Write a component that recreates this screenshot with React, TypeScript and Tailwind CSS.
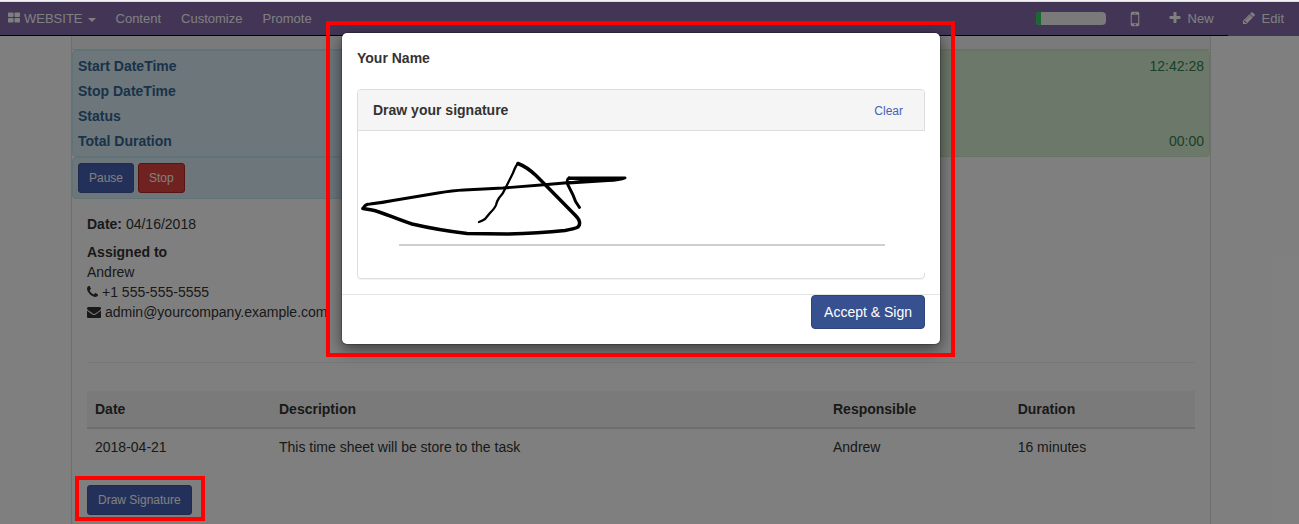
import { ReactNode } from "react";

type IconProps = { d: string; className: string; viewBox?: string };

function Icon({ d, className, viewBox = "0 0 1792 1792" }: IconProps) {
  return (
    <svg viewBox={viewBox} className={className} fill="currentColor" aria-hidden="true">
      <path d={d} />
    </svg>
  );
}

const ICONS = {
  blocks:
    "M832 1024v384q0 52-38 90t-90 38h-512q-52 0-90-38t-38-90v-384q0-52 38-90t90-38h512q52 0 90 38t38 90zm0-768v384q0 52-38 90t-90 38h-512q-52 0-90-38t-38-90v-384q0-52 38-90t90-38h512q52 0 90 38t38 90zm896 768v384q0 52-38 90t-90 38h-512q-52 0-90-38t-38-90v-384q0-52 38-90t90-38h512q52 0 90 38t38 90zm0-768v384q0 52-38 90t-90 38h-512q-52 0-90-38t-38-90v-384q0-52 38-90t90-38h512q52 0 90 38t38 90z",
  mobile:
    "M976 1408q0-33-23.5-56.5t-56.5-23.5-56.5 23.5-23.5 56.5 23.5 56.5 56.5 23.5 56.5-23.5 23.5-56.5zm208-160v-704q0-13-9.5-22.5t-22.5-9.5h-512q-13 0-22.5 9.5t-9.5 22.5v704q0 13 9.5 22.5t22.5 9.5h512q13 0 22.5-9.5t9.5-22.5zm-192-848q0-16-16-16h-160q-16 0-16 16t16 16h160q16 0 16-16zm288-16v1024q0 52-38 90t-90 38h-512q-52 0-90-38t-38-90v-1024q0-52 38-90t90-38h512q52 0 90 38t38 90z",
  plus: "M1600 736v192q0 40-28 68t-68 28h-416v416q0 40-28 68t-68 28h-192q-40 0-68-28t-28-68v-416h-416q-40 0-68-28t-28-68v-192q0-40 28-68t68-28h416v-416q0-40 28-68t68-28h192q40 0 68 28t28 68v416h416q40 0 68 28t28 68z",
  pencil:
    "M491 1536l91-91-235-235-91 91v107h128v128h107zm523-928q0-22-22-22-10 0-17 7l-542 542q-7 7-7 17 0 22 22 22 10 0 17-7l542-542q7-7 7-17zm-54-192l416 416-832 832h-416v-416zm683 96q0 53-37 90l-166 166-416-416 166-165q36-38 90-38 53 0 91 38l235 234q37 39 37 91z",
  phone:
    "M1600 1240q0 27-10 70.5t-21 68.5q-21 50-122 106-94 51-186 51-27 0-53-3.5t-57-12.5-47-14.5-55.5-20.5-49.5-18q-98-35-175-83-127-79-264-216t-216-264q-48-77-83-175-3-9-18-49.5t-20.5-55.5-14.5-47-12.5-57-3.5-53q0-92 51-186 56-101 106-122 25-11 68.5-21t70.5-10q14 0 21 3 18 6 53 76 11 19 30 54t35 63.5 31 53.5q3 4 17.5 25t21.5 35.5 7 28.5q0 20-28.5 50t-62 55-62 53-28.5 46q0 9 5 22.5t8.5 20.5 14 24 11.5 19q76 137 174 235t235 174q2 1 19 11.5t24 14 20.5 8.5 22.5 5q18 0 46-28.5t53-62 55-62 50-28.5q14 0 28.5 7t35.5 21.5 25 17.5q25 15 53.5 31t63.5 35 54 30q70 35 76 53 3 7 3 21z",
  envelope:
    "M1792 710v794q0 66-47 113t-113 47h-1472q-66 0-113-47t-47-113v-794q44 49 101 87 362 246 497 345 57 42 92.5 65.5t94.5 48 110 24.5h2q51 0 110-24.5t94.5-48 92.5-65.5q170-123 498-345 57-39 100-87zm0-294q0 79-49 151t-122 123q-376 261-468 325-10 7-42.5 31t-54 38.5-52 32.5-57.5 27-50 9h-2q-23 0-50-9t-57.5-27-52-32.5-54-38.5-42.5-31q-91-64-262-182.5t-205-142.5q-62-42-117-115.5t-55-136.5q0-78 41.5-130t118.5-52h1472q65 0 112.5 47t47.5 113z",
};

function SmallButton({ tone, children }: { tone: "primary" | "danger"; children: ReactNode }) {
  const colors =
    tone === "primary" ? "border-[#3e5499] bg-[#4662b5]" : "border-[#ac2925] bg-[#df4540]";
  return (
    <button
      type="button"
      className={`rounded-[3px] border px-2.5 py-[5px] text-xs leading-[18px] text-white ${colors}`}
    >
      {children}
    </button>
  );
}

function Highlight({ className }: { className: string }) {
  return <div className={`pointer-events-none absolute z-30 border-4 border-[#ff0000] ${className}`} />;
}

function Navbar() {
  return (
    <nav className="flex h-[34px] bg-[#856aad] text-[13px] leading-5 text-white">
      <div className="flex flex-1 items-center border-b border-black pl-2">
        <button type="button" className="flex items-center">
          <Icon d={ICONS.blocks} viewBox="64 128 1664 1408" className="mb-0.5 mr-1 h-[11px] w-3" />
          WEBSITE
          <span className="ml-[5px] mt-0.5 border-x-4 border-t-4 border-x-transparent border-t-white" />
        </button>
        <div className="ml-5 flex gap-5">
          <a href="#content">Content</a>
          <a href="#customize">Customize</a>
          <a href="#promote">Promote</a>
        </div>
        <div className="ml-auto flex items-center">
          <div className="flex h-[13px] w-[70px] overflow-hidden rounded bg-[#f5f5f5]">
            <div className="w-[5px] bg-[#30d060]" />
          </div>
          <button type="button" aria-label="Mobile preview" className="ml-[19px]">
            <Icon d={ICONS.mobile} className="size-5" />
          </button>
          <button type="button" className="ml-[23px] mr-[14px] flex items-center">
            <Icon d={ICONS.plus} className="mb-px mr-1.5 size-[14px]" />
            New
          </button>
        </div>
      </div>
      <button type="button" className="flex items-center pb-px pl-[14px] pr-[15px]">
        <Icon d={ICONS.pencil} className="mb-px mr-1.5 size-[14px]" />
        Edit
      </button>
    </nav>
  );
}

function TimerSummary() {
  return (
    <>
      <dl className="grid grid-cols-2 leading-[25px]">
        <div className="rounded border border-[#bce8f1] bg-[#d9edf7] px-[5px] pb-0.5 pt-[3px] font-bold text-[#346592]">
          <dt>Start DateTime</dt>
          <dt>Stop DateTime</dt>
          <dt>Status</dt>
          <dt>Total Duration</dt>
        </div>
        <div className="flex flex-col justify-between rounded border border-[#d0e9c6] bg-[#d9f0d3] px-[5px] pb-0.5 pt-[3px] text-right text-[#368050]">
          <dd>12:42:28</dd>
          <dd>00:00</dd>
        </div>
      </dl>
      <div className="flex w-1/2 gap-1 rounded border border-[#bce8f1] bg-[#d9edf7] p-[5px]">
        <SmallButton tone="primary">Pause</SmallButton>
        <SmallButton tone="danger">Stop</SmallButton>
      </div>
    </>
  );
}

function Timesheet() {
  return (
    <table className="w-full table-fixed text-left">
      <thead>
        <tr className="border-b-2 border-[#ddd] bg-[#f5f5f5]">
          <th className="w-[184px] p-2">Date</th>
          <th className="w-1/2 p-2">Description</th>
          <th className="w-1/6 p-2">Responsible</th>
          <th className="p-2">Duration</th>
        </tr>
      </thead>
      <tbody>
        <tr>
          <td className="p-2">2018-04-21</td>
          <td className="p-2">This time sheet will be store to the task</td>
          <td className="p-2">Andrew</td>
          <td className="p-2">16 minutes</td>
        </tr>
      </tbody>
    </table>
  );
}

function Signature() {
  return (
    <svg
      viewBox="0 0 280 113"
      className="h-[113px] w-[280px]"
      fill="none"
      stroke="#000"
      strokeLinecap="round"
      strokeLinejoin="round"
      role="img"
      aria-label="Signature"
    >
      <path
        strokeWidth="2.3"
        d="M121 91 Q125 89.500 127 88 L132 82 Q137 77 138 74 Q139 70 141 67 Q145 63 147 58 L155 42 Q158 34 160 32.500"
      />
      <path
        strokeWidth="3.5"
        d="M160 32.500 Q169 36 178 44.500 L187 53.500 L217 84 Q221 88 221.500 91 Q222 94 220 96 Q216 98 207 99.500 Q180 102.500 149 103 L109 102.500 Q80 99 54 93 C38 88 24 81 14 79 L5 77.500"
      />
      <path
        strokeWidth="2.9"
        d="M5 77.500 Q7 73 12 73 Q25 71.500 35 69.500 L80 62 Q95 59.500 106 59 L145 57 L189 53.500 L212 51.500"
      />
      <path
        fill="#000"
        stroke="none"
        d="M210 45.500 H267 Q269.500 46 268 48 Q262 50.500 250 51 L211 53.500 V50.500 L222 49 H210 Z"
      />
      <path strokeWidth="2.9" d="M211 47 Q208.500 48 209.500 53 Q212 58 215 64 Q217 71 221.500 76.500" />
    </svg>
  );
}

function SignDialog() {
  return (
    <div
      role="dialog"
      aria-labelledby="signer-name"
      className="relative mx-auto w-[600px] rounded-md border border-black/20 bg-white bg-clip-padding shadow-[0_5px_15px_rgba(0,0,0,0.5)]"
    >
      <Highlight className="-bottom-[13px] -left-4 -right-[15px] -top-3" />
      <div className="p-[15px]">
        <h2 id="signer-name" className="mb-[21px] font-bold">
          Your Name
        </h2>
        <section className="rounded border border-[#ddd] pb-[5px] shadow-[0_1px_1px_rgba(0,0,0,0.05)]">
          <header className="flex items-center justify-between rounded-t-[3px] border-b border-[#ddd] bg-[#f5f5f5] py-[5px] pl-[15px] pr-2.5">
            <h3 className="font-bold">Draw your signature</h3>
            <button type="button" className="px-[11px] pb-[5px] pt-[7px] text-xs leading-[18px] text-[#4662b5]">
              Clear
            </button>
          </header>
          <div className="-mr-px bg-white pb-[27px]">
            <Signature />
            <div className="ml-[41px] mr-10 h-0.5 bg-[#cfcfcf]" />
          </div>
        </section>
      </div>
      <footer className="flex justify-end border-t border-[#e5e5e5] px-[15px] pb-[15px]">
        <button
          type="button"
          className="rounded border border-[#2e437b] bg-[#375090] px-3 py-1.5 text-sm leading-5 text-white"
        >
          Accept &amp; Sign
        </button>
      </footer>
    </div>
  );
}

export default function App() {
  return (
    <div className="flex min-h-screen flex-col bg-white font-['Liberation_Sans',Arial,sans-serif] text-sm leading-5 text-[#333]">
      <div className="h-0.5 border-b border-[#dcdcdc] bg-[#f2f2f2]" />
      <div className="relative flex flex-1 flex-col">
        <Navbar />
        <div className="flex flex-1 flex-col pr-[17px]">
          <main className="mx-auto w-full max-w-[1140px] flex-1 border-x border-[#ddd]">
            <div className="h-[14px] border-b border-[#ddd] bg-[#f5f5f5]" />
            <TimerSummary />
            <div className="px-[15px] pb-2 pt-[15px]">
              <p className="mb-2">
                <strong>Date:</strong> 04/16/2018
              </p>
              <address className="mb-10 not-italic">
                <strong className="block">Assigned to</strong>
                <span className="block">Andrew</span>
                <span className="flex items-center gap-1">
                  <Icon d={ICONS.phone} viewBox="192 128 1408 1536" className="h-3 w-[11px]" />
                  +1 555-555-5555
                </span>
                <span className="flex items-center gap-1">
                  <Icon d={ICONS.envelope} className="size-[14px]" />
                  admin@yourcompany.example.com
                </span>
              </address>
              <hr className="mb-7 border-[#eee]" />
              <Timesheet />
              <div className="relative mt-5 w-fit">
                <SmallButton tone="primary">Draw Signature</SmallButton>
                <Highlight className="-bottom-1.5 -left-3 -right-[13px] -top-[9px]" />
              </div>
            </div>
          </main>
        </div>
        <div className="absolute inset-0 z-10 bg-black/50" />
        <div className="absolute inset-0 z-20 pr-[17px] pt-[30px]">
          <SignDialog />
        </div>
      </div>
    </div>
  );
}
